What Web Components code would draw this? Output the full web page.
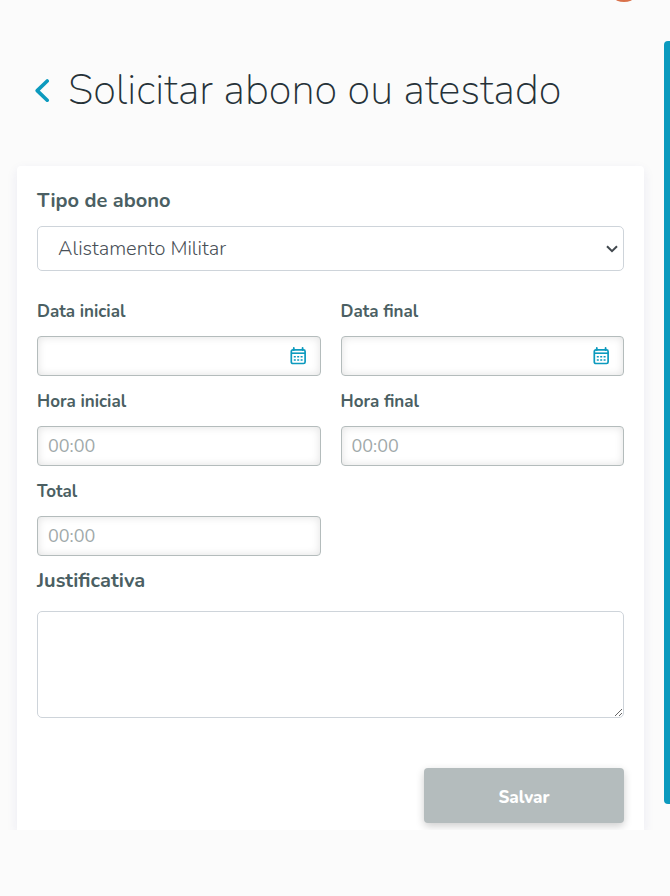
<!DOCTYPE html>
<html lang="pt-BR">
<head>
<meta charset="utf-8">
<meta name="viewport" content="width=device-width, initial-scale=1">
<title>Solicitar abono ou atestado</title>
<style>
  body {
    margin: 0;
    background: #fbfbfb;
    color: #263238;
    font-family: Nunito, Lato, "Open Sans", sans-serif;
    --accent: #0c9abe;
    --label: #4b5f63;
    --line: #ced4da;
  }
</style>
</head>
<body>
<app-shell>
  <user-avatar slot="user"></user-avatar>
  <page-title>Solicitar abono ou atestado</page-title>
  <form-card>
    <select-field label="Tipo de abono" options="Alistamento Militar|Atestado Médico|Doação de Sangue"></select-field>
    <field-grid>
      <text-field label="Data inicial" icon="calendar"></text-field>
      <text-field label="Data final" icon="calendar"></text-field>
      <text-field label="Hora inicial" placeholder="00:00"></text-field>
      <text-field label="Hora final" placeholder="00:00"></text-field>
      <text-field label="Total" placeholder="00:00"></text-field>
    </field-grid>
    <note-field label="Justificativa"></note-field>
    <save-button>Salvar</save-button>
  </form-card>
</app-shell>

<script>
class AppShell extends HTMLElement {
  constructor() {
    super();
    this.attachShadow({ mode: 'open' });
  }

  connectedCallback() {
    this.shadowRoot.innerHTML = `
      <style>
        :host {
          display: grid;
          grid-template-columns: minmax(0, 1fr) 6px;
          overflow: hidden;
        }
        .content {
          padding: 0 20px 0 17px;
        }
        header {
          display: flex;
          justify-content: flex-end;
          align-items: flex-end;
          height: 2px;
          overflow: hidden;
        }
        aside {
          margin: 41px 0 26px;
          border-radius: 4px 0 0 4px;
          background: var(--accent);
        }
      </style>
      <div class="content">
        <header><slot name="user"></slot></header>
        <main><slot></slot></main>
      </div>
      <aside></aside>
    `;
  }
}

class UserAvatar extends HTMLElement {
  constructor() {
    super();
    this.attachShadow({ mode: 'open' });
  }

  connectedCallback() {
    this.shadowRoot.innerHTML = `
      <style>
        :host {
          display: block;
          flex: none;
          width: 36px;
          height: 36px;
          margin-right: 2px;
          border-radius: 50%;
          background: #d9714a;
        }
      </style>
    `;
  }
}

class PageTitle extends HTMLElement {
  constructor() {
    super();
    this.attachShadow({ mode: 'open' });
  }

  connectedCallback() {
    this.shadowRoot.innerHTML = `
      <style>
        :host {
          display: flex;
          align-items: center;
          gap: 18px;
          padding: 61px 0 47px 18px;
        }
        a {
          display: flex;
          color: var(--accent);
        }
        h1 {
          margin: 0;
          font-size: 42px;
          font-weight: 200;
          line-height: 56px;
        }
      </style>
      <a href="#" aria-label="Voltar">
        <svg width="15" height="24" viewBox="0 0 15 24" fill="none" stroke="currentColor" stroke-width="3.6" stroke-linecap="round" stroke-linejoin="round">
          <path d="M12.2 2 2.2 11.6l10 9.6"/>
        </svg>
      </a>
      <h1><slot></slot></h1>
    `;
  }
}

class FormCard extends HTMLElement {
  constructor() {
    super();
    this.attachShadow({ mode: 'open' });
  }

  connectedCallback() {
    this.shadowRoot.innerHTML = `
      <style>
        :host {
          display: block;
          padding: 21px 20px 7px;
          border-radius: 4px 4px 0 0;
          background: #fff;
          box-shadow: 0 4px 12px rgba(40, 40, 140, 0.08);
        }
      </style>
      <slot></slot>
    `;
  }
}

class FieldGrid extends HTMLElement {
  constructor() {
    super();
    this.attachShadow({ mode: 'open' });
  }

  connectedCallback() {
    this.shadowRoot.innerHTML = `
      <style>
        :host {
          display: grid;
          grid-template-columns: repeat(2, minmax(0, 1fr));
          gap: 14px 20px;
          margin: 29px 0 11px;
        }
      </style>
      <slot></slot>
    `;
  }
}

class SelectField extends HTMLElement {
  constructor() {
    super();
    this.attachShadow({ mode: 'open' });
  }

  connectedCallback() {
    const options = this.getAttribute('options').split('|');
    this.shadowRoot.innerHTML = `
      <style>
        :host {
          display: block;
        }
        label {
          display: block;
          margin-bottom: 11px;
          color: var(--label);
          font-size: 20px;
          font-weight: 700;
          line-height: 28px;
        }
        .box {
          display: grid;
          align-items: center;
        }
        select, svg {
          grid-area: 1 / 1;
        }
        select {
          appearance: none;
          width: 100%;
          height: 45px;
          padding: 0 32px 0 20px;
          border: 1px solid var(--line);
          border-radius: 5px;
          background: #fff;
          color: #495057;
          font-family: inherit;
          font-size: 20px;
          font-weight: 300;
        }
        svg {
          justify-self: end;
          margin-right: 6px;
          pointer-events: none;
        }
      </style>
      <label for="control">${this.getAttribute('label')}</label>
      <div class="box">
        <select id="control">${options.map(text => `<option>${text}</option>`).join('')}</select>
        <svg width="12" height="8" viewBox="0 0 12 8" fill="none" stroke="#41484e" stroke-width="2">
          <path d="M1 1.2l5 5 5-5"/>
        </svg>
      </div>
    `;
  }
}

class TextField extends HTMLElement {
  constructor() {
    super();
    this.attachShadow({ mode: 'open' });
  }

  connectedCallback() {
    this.shadowRoot.innerHTML = `
      <style>
        :host {
          display: block;
        }
        label {
          display: block;
          margin-bottom: 12px;
          color: var(--label);
          font-size: 17px;
          font-weight: 700;
          line-height: 24px;
        }
        .box {
          display: grid;
          align-items: center;
        }
        input, button {
          grid-area: 1 / 1;
        }
        input {
          box-sizing: border-box;
          width: 100%;
          height: 40px;
          padding: 0 10px;
          border: 1px solid #b4bcbc;
          border-radius: 4px;
          background: #fff;
          box-shadow: inset 0 0 8px rgba(0, 0, 0, 0.12);
          color: #495057;
          font-family: inherit;
          font-size: 18px;
        }
        input::placeholder {
          color: #9fa9aa;
        }
        button {
          display: flex;
          justify-self: end;
          margin-right: 14px;
          padding: 0;
          border: 0;
          background: none;
          color: var(--accent);
        }
      </style>
      <label for="control">${this.getAttribute('label')}</label>
      <div class="box">
        <input id="control" type="text" placeholder="${this.getAttribute('placeholder') || ''}">
        ${this.getAttribute('icon') === 'calendar' ? this.calendarButton() : ''}
      </div>
    `;
  }

  calendarButton() {
    return `
      <button type="button" aria-label="Abrir calendário">
        <svg width="17" height="18" viewBox="0 0 17 18" fill="none" stroke="currentColor">
          <rect x="1.3" y="2.8" width="13.8" height="13.7" rx="1.6" stroke-width="1.7"/>
          <path d="M1.3 6.2h13.8" stroke-width="1.6"/>
          <path d="M3.8 1v2M12.6 1v2" stroke-width="1.8" stroke-linecap="round"/>
          <path d="M3.8 9.8h2M7.2 9.8h2M10.6 9.8h2M3.8 13h2M7.2 13h2M10.6 13h2" stroke-width="1.6"/>
        </svg>
      </button>
    `;
  }
}

class NoteField extends HTMLElement {
  constructor() {
    super();
    this.attachShadow({ mode: 'open' });
  }

  connectedCallback() {
    this.shadowRoot.innerHTML = `
      <style>
        :host {
          display: block;
        }
        label {
          display: block;
          margin-bottom: 16px;
          color: var(--label);
          font-size: 20px;
          font-weight: 700;
          line-height: 28px;
        }
        textarea {
          display: block;
          box-sizing: border-box;
          width: 100%;
          height: 107px;
          padding: 8px 12px;
          border: 1px solid var(--line);
          border-radius: 5px;
          background: #fff;
          color: #495057;
          font-family: inherit;
          font-size: 18px;
          resize: vertical;
        }
      </style>
      <label for="control">${this.getAttribute('label')}</label>
      <textarea id="control"></textarea>
    `;
  }
}

class SaveButton extends HTMLElement {
  constructor() {
    super();
    this.attachShadow({ mode: 'open' });
  }

  connectedCallback() {
    this.shadowRoot.innerHTML = `
      <style>
        :host {
          display: flex;
          justify-content: flex-end;
          margin-top: 50px;
        }
        button {
          width: 200px;
          height: 55px;
          padding: 3px 0 0;
          border: 0;
          border-radius: 4px;
          background: #b4bcbd;
          box-shadow: 0 3px 8px rgba(0, 0, 0, 0.2);
          color: #fff;
          font-family: inherit;
          font-size: 17px;
          font-weight: 800;
        }
      </style>
      <button type="button"><slot></slot></button>
    `;
  }
}

customElements.define('app-shell', AppShell);
customElements.define('user-avatar', UserAvatar);
customElements.define('page-title', PageTitle);
customElements.define('form-card', FormCard);
customElements.define('field-grid', FieldGrid);
customElements.define('select-field', SelectField);
customElements.define('text-field', TextField);
customElements.define('note-field', NoteField);
customElements.define('save-button', SaveButton);
</script>
</body>
</html>
